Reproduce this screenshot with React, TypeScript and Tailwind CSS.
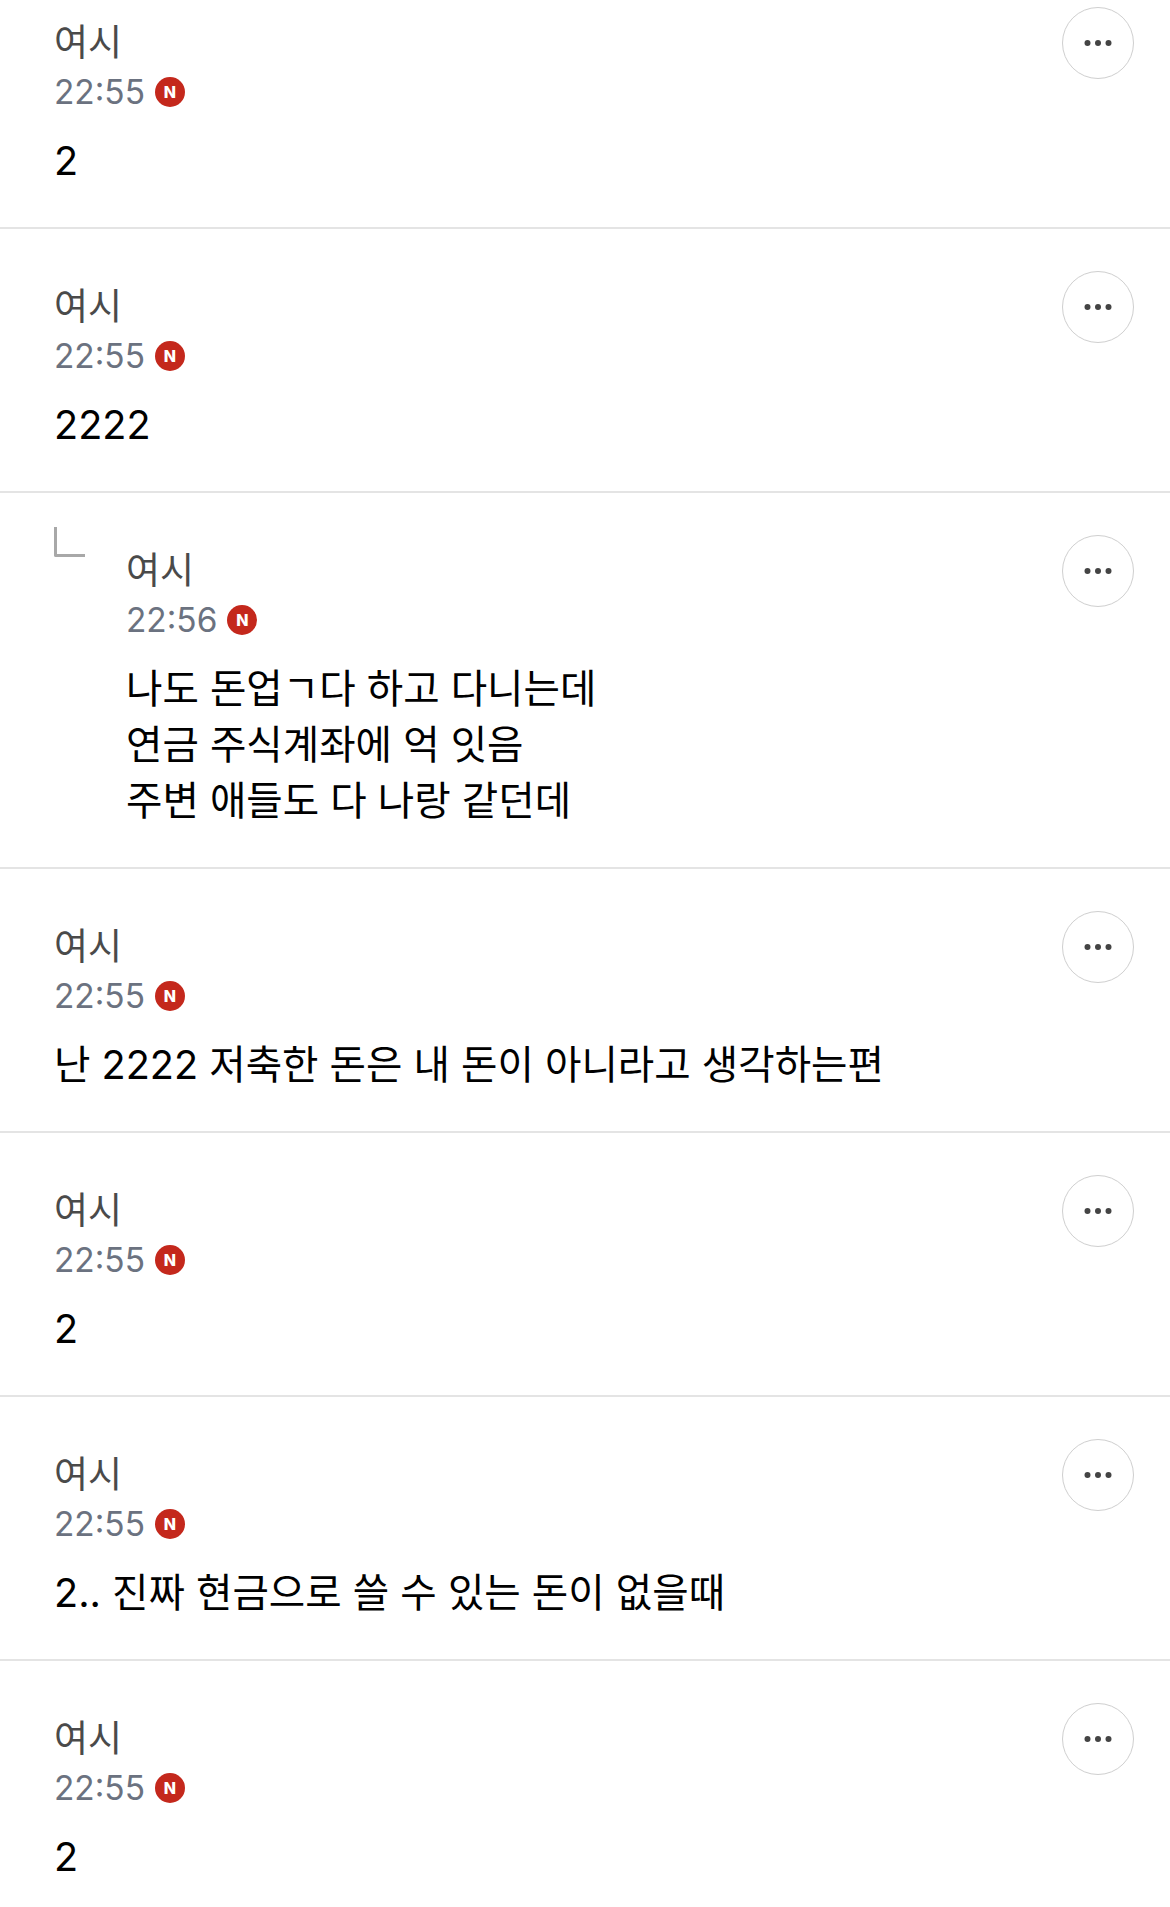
type Comment = {
  time: string;
  lines: string[];
  reply?: boolean;
};

const comments: Comment[] = [
  { time: "22:55", lines: ["2"] },
  { time: "22:55", lines: ["2222"] },
  {
    time: "22:56",
    reply: true,
    lines: ["나도 돈업ㄱ다 하고 다니는데", "연금 주식계좌에 억 잇음", "주변 애들도 다 나랑 같던데"],
  },
  { time: "22:55", lines: ["난 2222 저축한 돈은 내 돈이 아니라고 생각하는편"] },
  { time: "22:55", lines: ["2"] },
  { time: "22:55", lines: ["2.. 진짜 현금으로 쓸 수 있는 돈이 없을때"] },
  { time: "22:55", lines: ["2"] },
];

function CommentRow({ comment }: { comment: Comment }) {
  return (
    <div className="flex items-start border-b-2 border-[#e4e4e4] pl-[54px] pr-[36px] pt-[42px] pb-[38px] last:border-b-0">
      {comment.reply && (
        <div className="-mt-[8px] mr-[42px] h-[30px] w-[31px] shrink-0 rounded-bl-[2px] border-b-[3px] border-l-[3px] border-[#a8a8a8]" />
      )}
      <div className={comment.reply ? "-ml-px min-w-0 flex-1 pt-[11px]" : "min-w-0 flex-1 pt-[11px]"}>
        <div className="text-[37px] leading-[50px] text-[#4a4a4a]">여시</div>
        <div className="flex h-[48px] items-center gap-[10px]">
          <span className="text-[33.4px] text-[#6b7280]">{comment.time}</span>
          <span className="flex h-[30px] w-[30px] items-center justify-center rounded-full bg-[#c4281c] text-[16px] font-extrabold leading-none text-white">
            N
          </span>
        </div>
        <div className="mt-[17px] text-[39.6px] leading-[56px] text-black">
          {comment.lines.map((line) => (
            <div key={line}>{line}</div>
          ))}
        </div>
      </div>
      <button className="flex h-[72px] w-[72px] shrink-0 items-center justify-center rounded-full border-[1.5px] border-[#cfcfcf]">
        <svg width="28" height="8" viewBox="0 0 28 8" className="fill-[#444444]">
          <circle cx="3.5" cy="4" r="3" />
          <circle cx="14" cy="4" r="3" />
          <circle cx="24.5" cy="4" r="3" />
        </svg>
      </button>
    </div>
  );
}

export default function App() {
  return (
    <div className="h-[1907px] overflow-hidden bg-white font-['Inter','Noto_Sans_CJK_KR',sans-serif]">
      <div className="-mt-[35px]">
        {comments.map((comment, i) => (
          <CommentRow key={i} comment={comment} />
        ))}
      </div>
    </div>
  );
}
